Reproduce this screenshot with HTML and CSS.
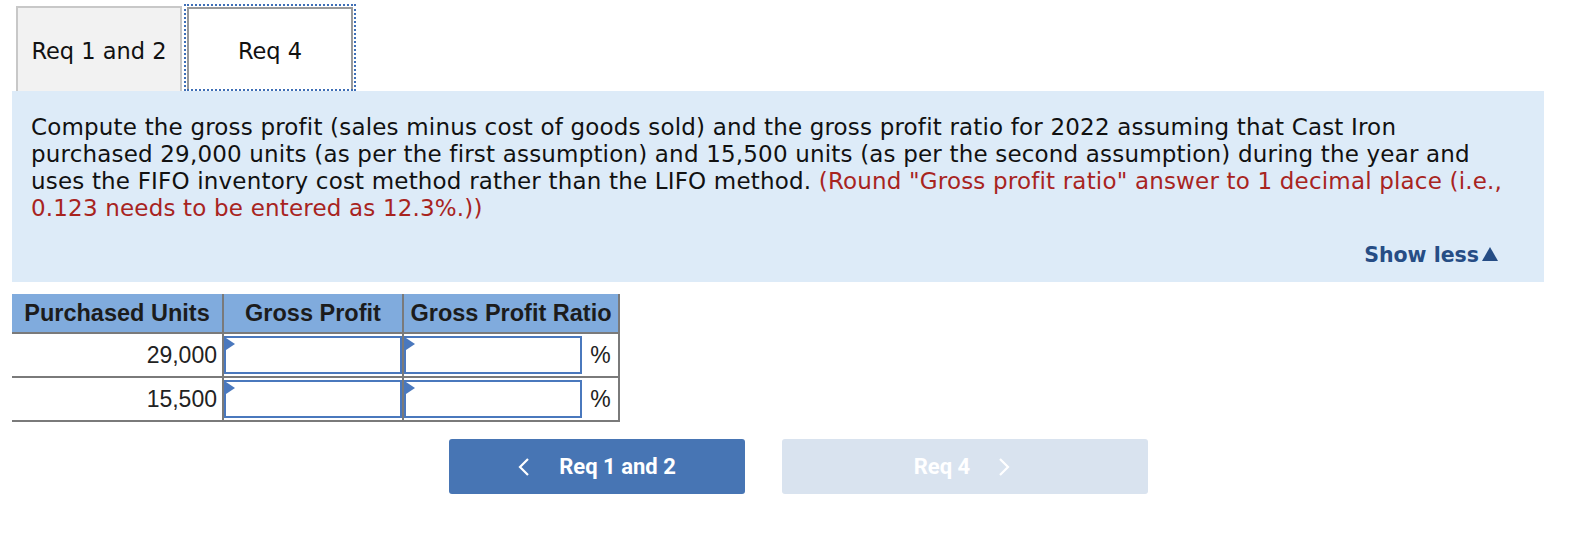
FILE: index.html
```html
<!DOCTYPE html>
<html lang="en">
<head>
<meta charset="utf-8">
<title>Req 4</title>
<link rel="stylesheet" href="styles.css">
</head>
<body>
<div class="page">
  <div class="tabs">
    <div class="tab tab-inactive">Req 1 and 2</div>
    <div class="tab-focus"><div class="tab tab-active">Req 4</div></div>
  </div>
  <div class="panel">
    <p class="question">Compute the gross profit (sales minus cost of goods sold) and the gross profit ratio for 2022 assuming that Cast Iron<br>purchased 29,000 units (as per the first assumption) and 15,500 units (as per the second assumption) during the year and<br>uses the FIFO inventory cost method rather than the LIFO method. <span class="hint">(Round "Gross profit ratio" answer to 1 decimal place (i.e.,<br>0.123 needs to be entered as 12.3%.))</span></p>
    <div class="show-less">Show less<span class="tri"></span></div>
  </div>
  <table class="grid">
    <thead>
      <tr>
        <th class="c1">Purchased Units</th>
        <th class="c2">Gross Profit</th>
        <th class="c3" colspan="2">Gross Profit Ratio</th>
      </tr>
    </thead>
    <tbody>
      <tr>
        <td class="num">29,000</td>
        <td class="in"><div class="box"></div></td>
        <td class="in"><div class="box"></div></td>
        <td class="pct">%</td>
      </tr>
      <tr>
        <td class="num">15,500</td>
        <td class="in"><div class="box"></div></td>
        <td class="in"><div class="box"></div></td>
        <td class="pct">%</td>
      </tr>
    </tbody>
  </table>
  <div class="nav">
    <div class="btn btn-prev">
      <svg class="chev chev-left" width="12" height="18" viewBox="0 0 12 18"><path d="M10 1 L2 9 L10 17" fill="none" stroke="#ffffff" stroke-width="2.2"/></svg>
      <span>Req 1 and 2</span>
    </div>
    <div class="btn btn-next">
      <span>Req 4</span>
      <svg class="chev chev-right" width="12" height="18" viewBox="0 0 12 18"><path d="M2 1 L10 9 L2 17" fill="none" stroke="#ffffff" stroke-width="2.2"/></svg>
    </div>
  </div>
</div>
</body>
</html>
```

FILE: styles.css
```css
html, body {
  margin: 0;
  padding: 0;
  background: #ffffff;
}

.page {
  padding: 4px 44px 0 12px;
  font-family: "DejaVu Sans", Verdana, sans-serif;
  color: #111;
}

.tabs {
  display: flex;
  align-items: flex-end;
  padding-left: 4px;
}

.tab {
  box-sizing: border-box;
  display: flex;
  align-items: center;
  justify-content: center;
  font-size: 22.5px;
  color: #111;
}

.tab-inactive {
  width: 166px;
  height: 85px;
  padding-top: 2px;
  background: #f2f2f2;
  border: 2px solid #c8c8c8;
  border-bottom: none;
}

.tab-focus {
  margin-left: 2px;
  padding: 1px 1px 0 1px;
  border: 2px dotted #3f6fb6;
}

.tab-active {
  width: 166px;
  height: 82px;
  padding-top: 4px;
  background: #ffffff;
  border: 2px solid #9a9a9a;
  border-bottom: none;
}

.panel {
  background: #ddebf8;
  padding: 23px 0 15px 19px;
  display: flex;
  flex-direction: column;
}

.question {
  margin: 0;
  font-size: 23px;
  line-height: 27px;
  letter-spacing: 0.18px;
  white-space: nowrap;
  color: #111;
}

.hint {
  color: #a8241f;
}

.show-less {
  align-self: flex-end;
  margin-top: 21px;
  margin-right: 46px;
  font-weight: bold;
  font-size: 20.5px;
  color: #264d85;
  display: flex;
  align-items: center;
}

.tri {
  width: 0;
  height: 0;
  margin-left: 3px;
  margin-bottom: 2px;
  border-left: 8px solid transparent;
  border-right: 8px solid transparent;
  border-bottom: 14px solid #264d85;
}

.grid {
  margin-top: 12px;
  border-collapse: collapse;
  font-family: "Liberation Sans", Arial, sans-serif;
  color: #222;
}

.grid th {
  background: #80abdd;
  height: 38px;
  padding: 0;
  font-size: 23.5px;
  font-weight: bold;
  border-bottom: 2px solid #7a7a7a;
  text-align: center;
  color: #1c1c1c;
}

.grid th.c1 { width: 210px; }
.grid th.c2 { width: 178px; border-left: 2px solid #7a7a7a; }
.grid th.c3 { width: 214px; border-left: 2px solid #7a7a7a; border-right: 2px solid #7a7a7a; }

.grid td {
  padding: 0;
  height: 40px;
  border-bottom: 2px solid #7a7a7a;
}

.grid td.num {
  text-align: right;
  font-size: 23px;
  padding-right: 5px;
}

.grid td.in {
  border-left: 2px solid #7a7a7a;
  padding: 1px 0;
}

.box {
  position: relative;
  box-sizing: border-box;
  height: 38px;
  border: 2px solid #4a78bd;
  background: #fff;
}

.box::before {
  content: "";
  position: absolute;
  left: 0;
  top: 0;
  border-top: 6px solid transparent;
  border-bottom: 6px solid transparent;
  border-left: 9px solid #4a78bd;
}

.grid td.pct {
  width: 35px;
  text-align: center;
  font-size: 23px;
  border-right: 2px solid #7a7a7a;
  padding-left: 1px;
}

.nav {
  display: flex;
  margin-top: 17px;
  padding-left: 437px;
  gap: 37px;
}

.btn {
  box-sizing: border-box;
  height: 55px;
  border-radius: 3px;
  display: flex;
  align-items: center;
  justify-content: center;
  font-family: Roboto, "Liberation Sans", sans-serif;
  font-weight: bold;
  font-size: 22px;
  color: #ffffff;
}

.btn-prev {
  width: 296px;
  background: #4775b4;
}

.btn-next {
  width: 366px;
  background: #d9e3ef;
  padding-right: 6px;
}

.chev { display: block; }
.chev-left { margin-right: 29px; }
.chev-right { margin-left: 28px; }
```
